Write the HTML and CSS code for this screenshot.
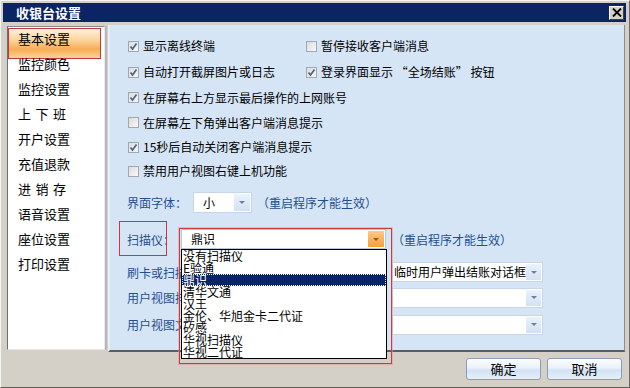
FILE: index.html
```html
<!DOCTYPE html>
<html lang="zh-CN">
<head>
<meta charset="utf-8">
<title>收银台设置</title>
<link rel="stylesheet" href="styles.css">
</head>
<body>
<div class="window">
  <div class="titlebar">
    <span class="title">收银台设置</span>
    <span class="close">
      <svg width="10" height="9" viewBox="0 0 10 9"><path d="M1 0.5 L9 8.5 M9 0.5 L1 8.5" stroke="#000" stroke-width="1.8"/></svg>
    </span>
  </div>
  <div class="main">
    <ul class="nav">
      <li class="nav-item active"><span>基本设置</span></li>
      <li class="nav-item"><span>监控颜色</span></li>
      <li class="nav-item"><span>监控设置</span></li>
      <li class="nav-item"><span class="spread">上下班</span></li>
      <li class="nav-item"><span>开户设置</span></li>
      <li class="nav-item"><span>充值退款</span></li>
      <li class="nav-item"><span class="spread">进销存</span></li>
      <li class="nav-item"><span>语音设置</span></li>
      <li class="nav-item"><span>座位设置</span></li>
      <li class="nav-item"><span>打印设置</span></li>
    </ul>
    <div class="panel">
      <div class="row r26">
        <label class="chk col1"><span class="box on"><svg width="9" height="9" viewBox="0 0 9 9"><path d="M1.5 4.5 L3.5 7 L7.5 1.5" fill="none" stroke="#4a6590" stroke-width="1.7"/></svg></span>显示离线终端</label>
        <label class="chk"><span class="box"></span>暂停接收客户端消息</label>
      </div>
      <div class="row r26">
        <label class="chk col1"><span class="box on"><svg width="9" height="9" viewBox="0 0 9 9"><path d="M1.5 4.5 L3.5 7 L7.5 1.5" fill="none" stroke="#4a6590" stroke-width="1.7"/></svg></span>自动打开截屏图片或日志</label>
        <label class="chk"><span class="box on"><svg width="9" height="9" viewBox="0 0 9 9"><path d="M1.5 4.5 L3.5 7 L7.5 1.5" fill="none" stroke="#4a6590" stroke-width="1.7"/></svg></span>登录界面显示 “全场结账” 按钮</label>
      </div>
      <div class="row r25">
        <label class="chk"><span class="box on"><svg width="9" height="9" viewBox="0 0 9 9"><path d="M1.5 4.5 L3.5 7 L7.5 1.5" fill="none" stroke="#4a6590" stroke-width="1.7"/></svg></span>在屏幕右上方显示最后操作的上网账号</label>
      </div>
      <div class="row r25">
        <label class="chk"><span class="box"></span>在屏幕左下角弹出客户端消息提示</label>
      </div>
      <div class="row r24">
        <label class="chk"><span class="box on"><svg width="9" height="9" viewBox="0 0 9 9"><path d="M1.5 4.5 L3.5 7 L7.5 1.5" fill="none" stroke="#4a6590" stroke-width="1.7"/></svg></span>15秒后自动关闭客户端消息提示</label>
      </div>
      <div class="row r24">
        <label class="chk"><span class="box"></span>禁用用户视图右键上机功能</label>
      </div>

      <div class="field font-row">
        <span class="lbl">界面字体：</span>
        <span class="select sel-small"><span class="val">小</span><span class="arrow"><i></i></span></span>
        <span class="note">（重启程序才能生效）</span>
      </div>

      <div class="field scan-row">
        <span class="lbl mark">扫描仪：</span>
        <span class="select sel-scan">
          <span class="val">鼎识</span><span class="arrow hot"><i></i></span>
          <span class="mark-box"></span>
          <ul class="list">
            <li>没有扫描仪</li>
            <li>E验通</li>
            <li class="sel">鼎识</li>
            <li>清华文通</li>
            <li>汉王</li>
            <li>金伦、华旭金卡二代证</li>
            <li>矽感</li>
            <li>华视扫描仪</li>
            <li>华视二代证</li>
          </ul>
        </span>
        <span class="note">（重启程序才能生效）</span>
      </div>

      <div class="field wide-row r1">
        <span class="lbl wide">刷卡或扫描仪刷卡后：</span>
        <span class="select sel-wide"><span class="val">临时用户弹出结账对话框</span><span class="arrow"><i></i></span></span>
      </div>
      <div class="field wide-row r2">
        <span class="lbl wide">用户视图排列方式：</span>
        <span class="select sel-wide"><span class="val"></span><span class="arrow"><i></i></span></span>
      </div>
      <div class="field wide-row r3">
        <span class="lbl wide">用户视图文字大小：</span>
        <span class="select sel-wide"><span class="val"></span><span class="arrow"><i></i></span></span>
      </div>
    </div>
  </div>
  <div class="footer">
    <button class="btn">确定</button>
    <button class="btn">取消</button>
  </div>
</div>
</body>
</html>
```

FILE: styles.css
```css
* { box-sizing: border-box; }
html, body { margin: 0; padding: 0; }
body {
  width: 630px;
  height: 388px;
  overflow: hidden;
  font-family: "Noto Sans CJK SC", "Noto Sans", sans-serif;
  font-size: 12px;
  color: #000;
  background: #d4d0c8;
}
.window {
  width: 630px;
  height: 388px;
  background: #d4d0c8;
  border: 1px solid;
  border-color: #f4f4f4 #6a6a6a #5a5a5a #f4f4f4;
  padding: 2px 3px 1px 2px;
  display: flex;
  flex-direction: column;
}
.titlebar {
  height: 19px;
  background: #0b2463;
  display: flex;
  align-items: center;
  justify-content: space-between;
  padding: 0 2px 0 13px;
  flex: none;
}
.title {
  color: #fff;
  font-weight: bold;
  font-size: 13px;
  line-height: 19px;
}
.close {
  width: 15px;
  height: 14px;
  background: #d4d0c8;
  border: 1px solid;
  border-color: #fff #404040 #404040 #fff;
  display: flex;
  align-items: center;
  justify-content: center;
}
.main {
  flex: none;
  height: 327px;
  margin-top: 3px;
  display: flex;
  padding-left: 4px;
}
.nav {
  list-style: none;
  margin: 1px 0 2px 0;
  padding: 1px 0 0 0;
  width: 98px;
  background: #fff;
  border: 1px solid;
  border-color: #8a8a8a #e8e8e8 #e8e8e8 #6f6f6f;
  box-shadow: 2px 0 0 #b8b8b8;
}
.nav-item {
  position: relative;
  height: 25px;
  line-height: 22px;
  padding-left: 10px;
  font-size: 13px;
}
.nav-item span { position: relative; z-index: 1; }
.nav-item .spread { letter-spacing: 4.5px; }
.nav-item.active::before {
  content: "";
  position: absolute;
  left: 0;
  right: 3px;
  top: 0;
  height: 29px;
  border: 1px solid #c0393b;
  background: linear-gradient(#fff1dd 0%, #fbd7a3 35%, #f6ad55 70%, #fbd29a 100%);
  z-index: 0;
}
.panel {
  flex: 1;
  margin-left: 3px;
  margin-right: 1px;
  background: #d6e5f6;
  border-left: 2px solid #e6eef8;
  border-right: 1px solid #8c8c8c;
  border-bottom: 2px solid #5c5c5c;
  padding: 8px 0 0 18px;
  position: relative;
}
.row { display: flex; align-items: center; }
.r26 { height: 26px; }
.r25 { height: 25px; }
.r24 { height: 24px; }
.chk {
  display: flex;
  align-items: center;
  white-space: nowrap;
  line-height: 14px;
}
.col1 { width: 178px; }
.box {
  width: 11px;
  height: 11px;
  border: 1px solid #a3a8b0;
  background: linear-gradient(135deg, #dcdcdc, #f8f8f8);
  margin-right: 4px;
  display: flex;
  align-items: center;
  justify-content: center;
  flex: none;
}
.field {
  display: flex;
  align-items: center;
  height: 20px;
  margin-left: -1px;
}
.font-row { margin-top: 9px; height: 21px; }
.scan-row { margin-top: 16px; }
.wide-row.r1 { margin-top: 13px; }
.wide-row.r2 { margin-top: 6px; height: 19px; }
.wide-row.r3 { margin-top: 8px; height: 19px; }
.lbl {
  color: #1f4f8f;
  white-space: nowrap;
  font-size: 12px;
}
.lbl.wide { width: 265px; overflow: hidden; }
.font-row .lbl { margin-right: 6px; width: 60px; }
.scan-row .lbl { margin-right: 6px; width: 48px; }
.note { color: #1f4f8f; white-space: nowrap; }
.font-row .note { margin-left: 5px; }
.scan-row .note { margin-left: 6px; }
.mark { position: relative; }
.mark::before {
  content: "";
  position: absolute;
  left: -8px;
  top: -10px;
  width: 46px;
  height: 33px;
  border: 1px solid #c8383a;
}
.select {
  position: relative;
  display: flex;
  align-items: center;
  height: 20px;
  background: #fff;
  border: 1px solid #c6d6ea;
  padding: 1px;
}
.select .val {
  flex: 1;
  padding-left: 8px;
  white-space: nowrap;
  overflow: hidden;
  line-height: 16px;
}
.sel-small { width: 59px; height: 21px; }
.sel-scan { width: 205px; border-color: #b8c8dc; }
.sel-wide { width: 151px; padding-left: 0; }
.sel-wide .val { padding-left: 1px; }
.arrow {
  width: 16px;
  height: 100%;
  background: linear-gradient(#eaf2fc, #d2e1f3);
  display: flex;
  align-items: center;
  justify-content: center;
  flex: none;
}
.sel-wide .arrow { width: 15px; }
.arrow i {
  width: 0;
  height: 0;
  border-left: 3px solid transparent;
  border-right: 3px solid transparent;
  border-top: 3px solid #6d7f99;
}
.arrow.hot { background: linear-gradient(#fcc883, #f5a13b); }
.arrow.hot i { border-top-color: #8a5a20; }
.mark-box {
  position: absolute;
  left: -3px;
  top: -2px;
  width: 213px;
  height: 136px;
  border: 1px solid #cc3a3c;
  box-shadow: 0 0 0 1px rgba(230, 150, 150, 0.5);
  pointer-events: none;
  z-index: 3;
}
.list {
  position: absolute;
  left: -1px;
  top: 19px;
  width: 206px;
  height: 110px;
  margin: 0;
  padding: 0;
  list-style: none;
  background: #fff;
  border: 1px solid #000;
  z-index: 2;
}
.list li {
  height: 12px;
  line-height: 12px;
  font-size: 12px;
  padding-left: 1px;
  white-space: nowrap;
}
.list li.sel {
  background: #0a246a;
  color: #fff;
  outline: 1px dotted #fff;
  outline-offset: -1px;
}
.footer {
  flex: 1;
  display: flex;
  justify-content: flex-end;
  align-items: flex-start;
  gap: 6px;
  padding: 6px 4px 0 0;
}
.btn {
  width: 75px;
  height: 22px;
  border: 1px solid #8b9db6;
  border-radius: 3px;
  background: linear-gradient(#fdfeff 0%, #e9f1fa 45%, #d2e2f4 55%, #e6effa 100%);
  font-family: "Noto Sans CJK SC", sans-serif;
  font-size: 13px;
  line-height: 18px;
  padding: 0;
  color: #000;
}
```
